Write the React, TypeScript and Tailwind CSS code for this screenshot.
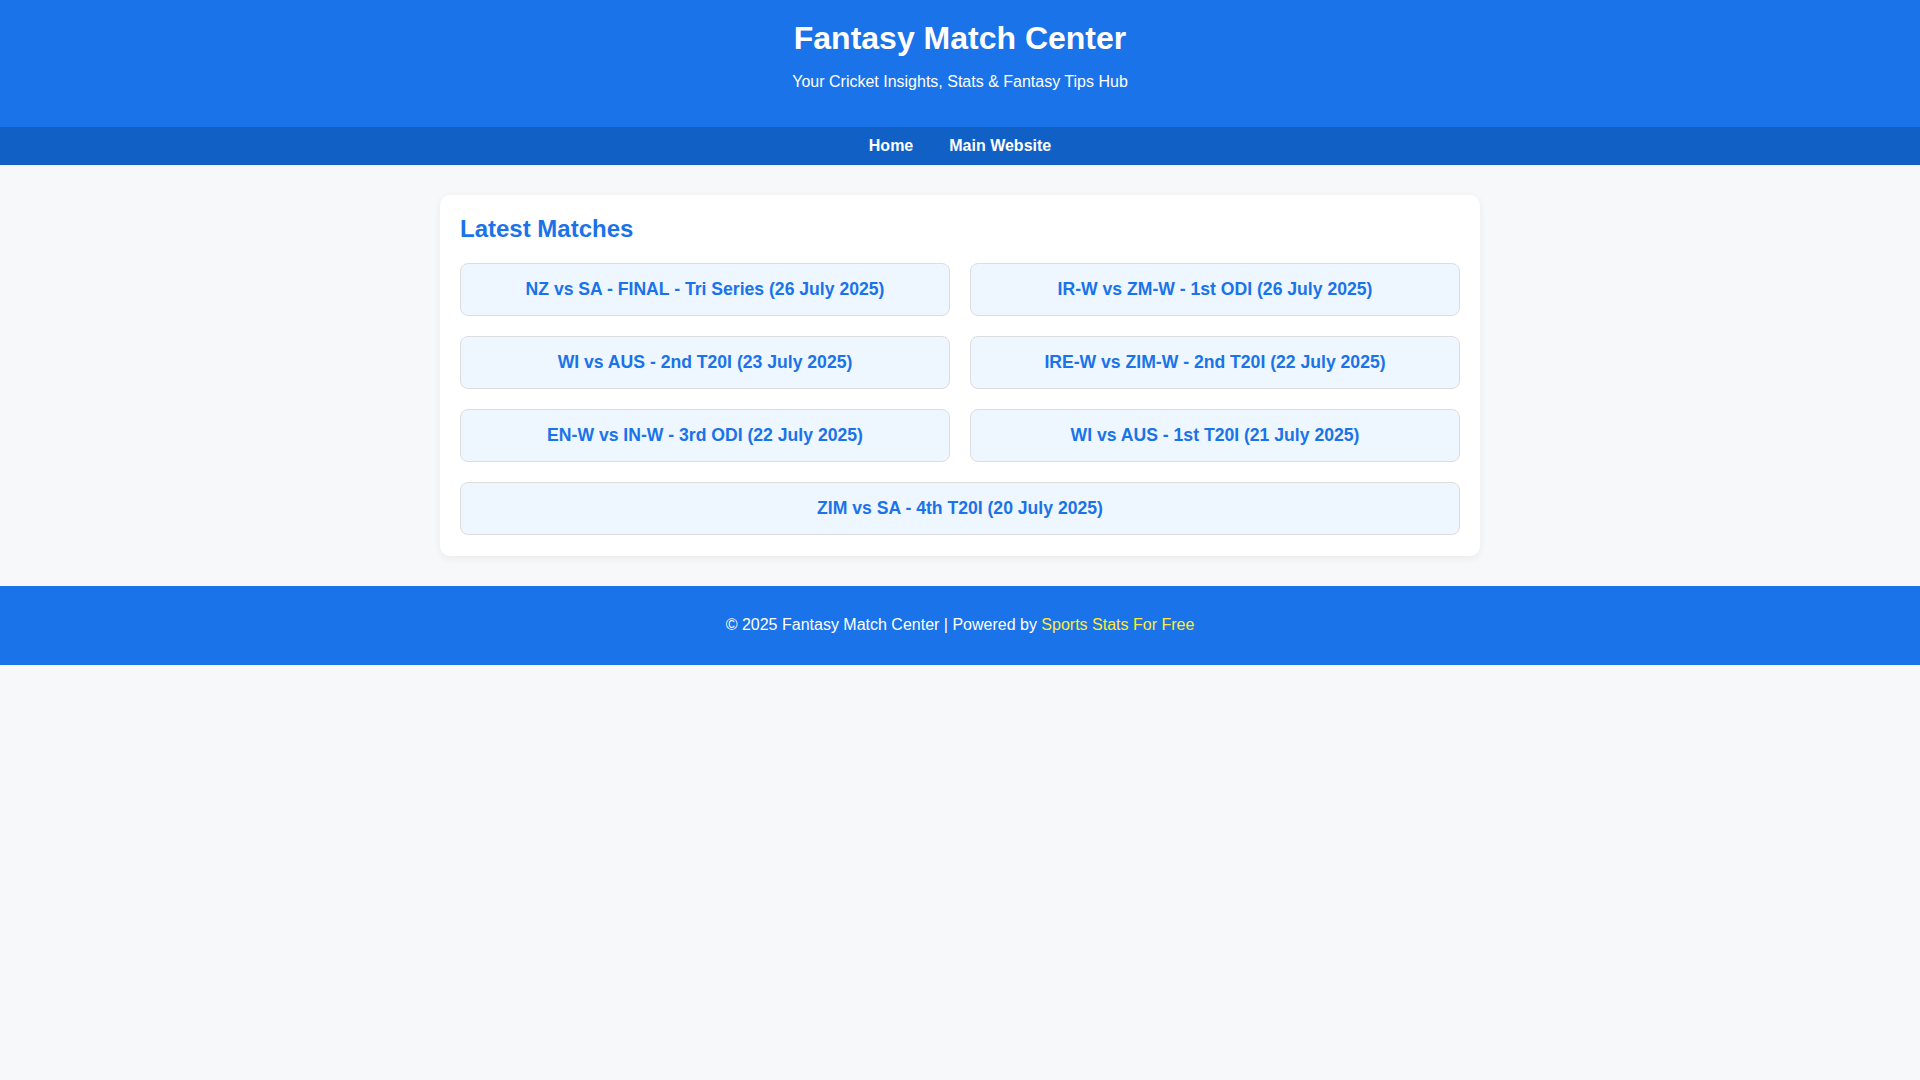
const matches = [
  "NZ vs SA - FINAL - Tri Series (26 July 2025)",
  "IR-W vs ZM-W - 1st ODI (26 July 2025)",
  "WI vs AUS - 2nd T20I (23 July 2025)",
  "IRE-W vs ZIM-W - 2nd T20I (22 July 2025)",
  "EN-W vs IN-W - 3rd ODI (22 July 2025)",
  "WI vs AUS - 1st T20I (21 July 2025)",
  "ZIM vs SA - 4th T20I (20 July 2025)",
];

export default function App() {
  return (
    <div className="min-h-screen bg-[#f7f8fa] font-['Liberation_Sans',Arial,sans-serif] text-[16px] text-[#333]">
      <header className="bg-[#1a73e8] text-white text-center pt-[20px] pb-[36px]">
        <h1 className="text-[32px] font-bold leading-[1.15] m-0">Fantasy Match Center</h1>
        <p className="mt-[16px] leading-[1.15]">Your Cricket Insights, Stats &amp; Fantasy Tips Hub</p>
      </header>

      <nav className="bg-[#1160c6] flex justify-center gap-[36px] py-[9.6px]">
        <a href="#" className="text-white font-bold leading-[1.15]">Home</a>
        <a href="#" className="text-white font-bold leading-[1.15]">Main Website</a>
      </nav>

      <main className="w-[1040px] mx-auto mt-[30px] bg-white rounded-[10px] shadow-[0_2px_8px_rgba(0,0,0,0.06)] px-[20px] pt-[20px] pb-[21px]">
        <h2 className="text-[24px] font-bold text-[#1a73e8] leading-[1.15] mb-[21px]">Latest Matches</h2>
        <div className="grid grid-cols-2 gap-[20px]">
          {matches.map((m, i) => (
            <a
              key={m}
              href="#"
              className={
                "block text-center bg-[#eef6ff] border border-[#dddddd] rounded-[8px] py-[15px] px-[10px] text-[#1a73e8] font-bold text-[17.6px] leading-[20.9px] " +
                (i === matches.length - 1 ? "col-span-2" : "")
              }
            >
              {m}
            </a>
          ))}
        </div>
      </main>

      <footer className="bg-[#1a73e8] text-white text-center mt-[30px] py-[30.5px] leading-[1.15]">
        © 2025 Fantasy Match Center | Powered by{" "}
        <a href="#" className="text-[#ffeb3b]">Sports Stats For Free</a>
      </footer>
    </div>
  );
}
